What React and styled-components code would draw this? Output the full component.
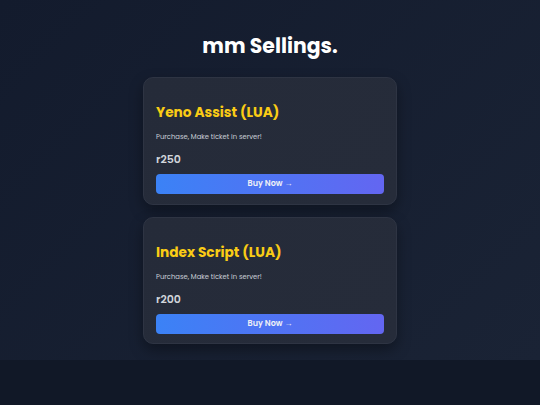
import React from "react";
import styled, { createGlobalStyle } from "styled-components";

const Global = createGlobalStyle`
  html { background: #111827; }
  body {
    margin: 0;
    font-family: "Poppins", "Open Sans", "Noto Sans", sans-serif;
    color: #fff;
  }
`;

const Page = styled.main`
  min-height: 360px;
  box-sizing: border-box;
  background: linear-gradient(135deg, #131b2d 0%, #1a2335 100%);
  display: flex;
  flex-direction: column;
  align-items: center;
  padding-top: 30px;
`;

const Heading = styled.h1`
  margin: 0;
  font-size: 20.4px;
  font-weight: 700;
  line-height: 32px;
`;

const List = styled.div`
  margin-top: 15px;
  display: flex;
  flex-direction: column;
  gap: 12px;
  width: 254px;
`;

const Card = styled.section`
  box-sizing: border-box;
  height: ${(p) => p.$h}px;
  background: linear-gradient(135deg, #252b39 0%, #262c3a 100%);
  border: 1px solid #2e3443;
  border-radius: 10px;
  box-shadow: 0 6px 14px rgba(0, 0, 0, 0.35);
  padding: 25px 12px 0 12px;
  display: flex;
  flex-direction: column;
`;

const Title = styled.h2`
  margin: 0;
  font-size: 13.7px;
  line-height: 20px;
  font-weight: 700;
  color: #facc15;
`;

const Desc = styled.p`
  margin: 9px 0 0;
  font-size: 6.8px;
  line-height: 10px;
  color: #c9ced6;
`;

const Price = styled.div`
  margin-top: 10px;
  font-size: 11px;
  line-height: 14px;
  font-weight: 600;
  color: #d1d5db;
`;

const BuyButton = styled.button`
  margin-top: 8px;
  height: 20px;
  border: none;
  border-radius: 4px;
  background: linear-gradient(90deg, #3b82f6 0%, #6366f1 100%);
  color: #eef0f6;
  font-family: inherit;
  font-size: 8px;
  font-weight: 600;
  cursor: pointer;
`;

const items = [
  { name: "Yeno Assist (LUA)", price: "r250", h: 128 },
  { name: "Index Script (LUA)", price: "r200", h: 127 },
];

export default function App() {
  return (
    <>
      <Global />
      <Page>
        <Heading>mm Sellings.</Heading>
        <List>
          {items.map((it) => (
            <Card key={it.name} $h={it.h}>
              <Title>{it.name}</Title>
              <Desc>Purchase, Make ticket in server!</Desc>
              <Price>{it.price}</Price>
              <BuyButton>Buy Now →</BuyButton>
            </Card>
          ))}
        </List>
      </Page>
    </>
  );
}
